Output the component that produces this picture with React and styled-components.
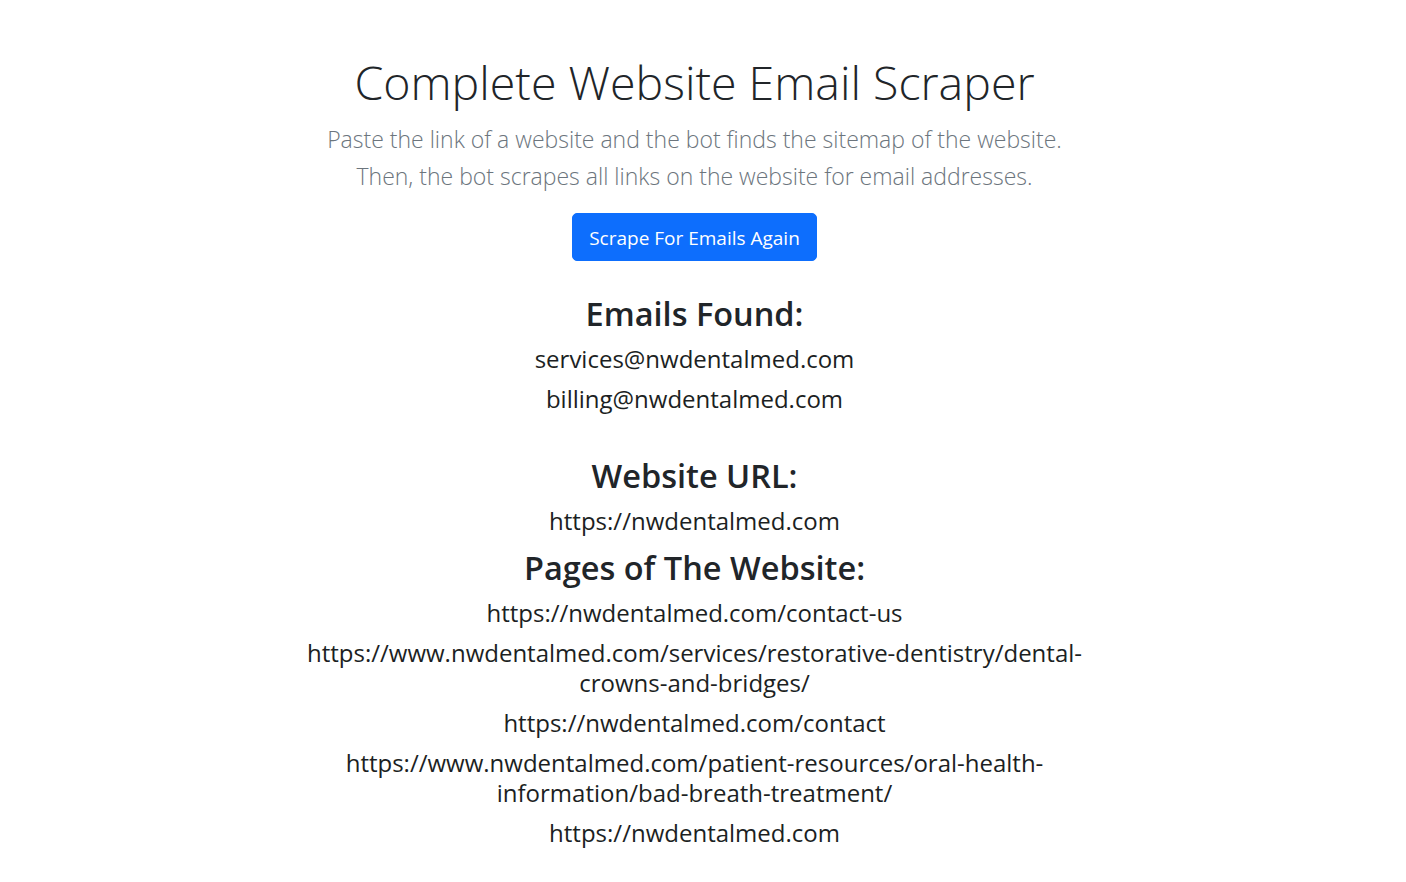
import styled, { createGlobalStyle } from 'styled-components';

const GlobalStyle = createGlobalStyle`
    body {
        margin: 0;
        background: #ffffff;
        font-family: 'Open Sans', 'Noto Sans', sans-serif;
        color: #212529;
    }
`;

const Page = styled.main`
    display: flex;
    flex-direction: column;
    align-items: center;
    padding: 53px 17px 30px 0;
    text-align: center;
`;

const Title = styled.h1`
    margin: 0;
    font-size: 46.5px;
    font-weight: 300;
    line-height: 58px;
    color: #212529;
`;

const Lead = styled.p`
    margin: 10px 0 0;
    font-size: 23px;
    font-weight: 300;
    line-height: 37px;
    color: #6c757d;
`;

const ScrapeButton = styled.button`
    margin-top: 18px;
    height: 48px;
    padding: 2px 16px 0;
    border: 1px solid #0d6efd;
    border-radius: 5px;
    background: #0d6efd;
    color: #ffffff;
    font-family: inherit;
    font-size: 19px;
    cursor: pointer;
`;

const Section = styled.section`
    display: flex;
    flex-direction: column;
    align-items: center;
    gap: 10px;
    max-width: 800px;
    margin-top: ${(p) => p.$top}px;
`;

const Heading = styled.h2`
    margin: ${(p) => p.$before || 0}px 0 ${(p) => p.$after || 0}px;
    font-size: 32.5px;
    font-weight: 600;
    line-height: 38px;
`;

const Item = styled.div`
    font-size: 24px;
    font-weight: 500;
    line-height: 30px;
    color: #1c1f23;
    overflow-wrap: anywhere;
`;

const emails = ['services@nwdentalmed.com', 'billing@nwdentalmed.com'];

const pages = [
    'https://nwdentalmed.com/contact-us',
    'https://www.nwdentalmed.com/services/restorative-dentistry/dental-crowns-and-bridges/',
    'https://nwdentalmed.com/contact',
    'https://www.nwdentalmed.com/patient-resources/oral-health-information/bad-breath-treatment/',
    'https://nwdentalmed.com',
];

const App = () => {
    return (
        <>
            <GlobalStyle />
            <Page>
                <Title>Complete Website Email Scraper</Title>
                <Lead>
                    Paste the link of a website and the bot finds the sitemap of the website.
                    <br />
                    Then, the bot scrapes all links on the website for email addresses.
                </Lead>
                <ScrapeButton>Scrape For Emails Again</ScrapeButton>

                <Section $top={34}>
                    <Heading $after={1}>Emails Found:</Heading>
                    {emails.map((e) => (
                        <Item key={e}>{e}</Item>
                    ))}
                </Section>

                <Section $top={43}>
                    <Heading $after={1}>Website URL:</Heading>
                    <Item>https://nwdentalmed.com</Item>
                    <Heading $before={3} $after={1}>Pages of The Website:</Heading>
                    {pages.map((p) => (
                        <Item key={p}>{p}</Item>
                    ))}
                </Section>
            </Page>
        </>
    );
};

export default App;
